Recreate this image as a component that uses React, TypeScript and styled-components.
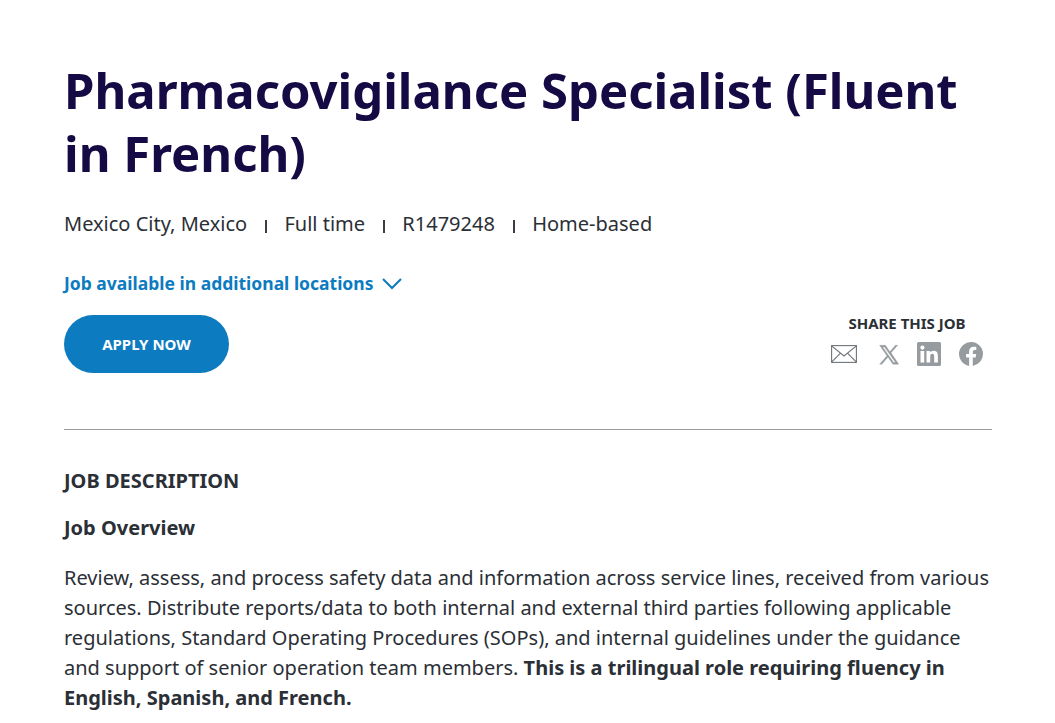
import styled, { createGlobalStyle } from "styled-components";

const GlobalStyle = createGlobalStyle`
    html, body {
        margin: 0;
        padding: 0;
        background: #ffffff;
        overflow: hidden;
    }
`;

const Page = styled.div`
    width: 1055px;
    height: 723px;
    overflow: hidden;
    box-sizing: border-box;
    padding: 59px 63px 0 64px;
    font-family: "Noto Sans", sans-serif;
    color: #2b2f36;
`;

const Title = styled.h1`
    margin: 0;
    font-size: 49px;
    line-height: 63px;
    font-weight: 700;
    color: #160a45;
`;

const MetaRow = styled.div`
    display: flex;
    align-items: center;
    margin-top: 24px;
    font-size: 20px;
    line-height: 30px;
`;

const Divider = styled.span`
    width: 1.5px;
    height: 13px;
    background: #3a3e44;
    margin: 4px 17.5px 0 18.3px;
`;

const LocationsLink = styled.a`
    display: flex;
    align-items: center;
    gap: 9px;
    margin-top: 31px;
    font-size: 17.5px;
    line-height: 26px;
    font-weight: 700;
    color: #0c7bc0;
`;

const ActionRow = styled.div`
    display: flex;
    justify-content: space-between;
    align-items: flex-start;
    margin-top: 19px;
    padding-bottom: 56px;
    border-bottom: 1px solid #9a9a9a;
`;

const ApplyButton = styled.button`
    width: 165px;
    height: 58px;
    border: none;
    border-radius: 29px;
    background: #0c7bc0;
    color: #ffffff;
    font-family: inherit;
    font-size: 15px;
    font-weight: 700;
`;

const Share = styled.div`
    display: flex;
    flex-direction: column;
    align-items: center;
    margin-top: -1px;
    margin-right: 9px;
`;

const ShareLabel = styled.div`
    font-size: 15px;
    line-height: 18px;
    font-weight: 700;
`;

const ShareIcons = styled.div`
    display: flex;
    align-items: center;
    gap: 18px;
    margin-top: 10px;
    color: #969b9f;
`;

const MailIcon = styled.svg`
    color: #6f7478;
    margin-right: 4px;
`;

const SectionLabel = styled.h2`
    margin: 37px 0 0;
    font-size: 20px;
    line-height: 28px;
    font-weight: 700;
`;

const SubHeading = styled.h3`
    margin: 19px 0 0;
    font-size: 20px;
    line-height: 28px;
    font-weight: 700;
`;

const Paragraph = styled.p`
    margin: 21px 0 0;
    font-size: 20px;
    line-height: 30px;
`;

export default function App() {
    return (
        <Page>
            <GlobalStyle />
            <Title>Pharmacovigilance Specialist (Fluent in French)</Title>
            <MetaRow>
                <span>Mexico City, Mexico</span>
                <Divider />
                <span>Full time</span>
                <Divider />
                <span>R1479248</span>
                <Divider />
                <span>Home-based</span>
            </MetaRow>
            <LocationsLink>
                Job available in additional locations
                <svg width="20" height="13" viewBox="0 0 20 13" fill="none" stroke="currentColor" strokeWidth="2">
                    <path d="M1 2l9 9 9-9" />
                </svg>
            </LocationsLink>
            <ActionRow>
                <ApplyButton>APPLY NOW</ApplyButton>
                <Share>
                    <ShareLabel>SHARE THIS JOB</ShareLabel>
                    <ShareIcons>
                        <MailIcon width="26" height="18" viewBox="0 0 26 18" fill="none" stroke="currentColor" strokeWidth="1.1">
                            <rect x="0.6" y="0.6" width="24.8" height="16.8" />
                            <path d="M0.6 0.8 13 11 25.4 0.8M0.6 17.2 9.5 8.2M25.4 17.2 16.5 8.2" />
                        </MailIcon>
                        <svg width="20" height="21" viewBox="0 0 24 24" fill="currentColor" stroke="currentColor" strokeWidth="0.5">
                            <path d="M14.2 10.2 22.4 1h-2.600l-6.800 7.800L7.700 1H.8l8.800 12.600L.8 23.600h2.600l7.400-8.600 5.900 8.600h6.900l-9-13.400ZM4.300 3h2.400l13.200 18.600h-2.400L4.300 3Z" />
                        </svg>
                        <svg width="24" height="24" viewBox="0 0 24 24" fill="currentColor">
                            <path d="M1.500 0h21A1.500 1.500 0 0 1 24 1.500v21a1.500 1.500 0 0 1-1.500 1.500h-21A1.500 1.500 0 0 1 0 22.500v-21A1.500 1.500 0 0 1 1.500 0Zm2 9v11.500h3.700V9H3.500Zm1.900-5.500a2.100 2.100 0 1 0 0 4.200 2.100 2.100 0 0 0 0-4.200ZM9.500 9v11.500h3.700v-6c0-1.600.5-2.800 2.100-2.800s1.900 1.300 1.900 2.900v5.900h3.700v-6.800c0-3.200-1.300-5-4.200-5-1.700 0-2.900.9-3.500 1.900V9H9.500Z" fillRule="evenodd" />
                        </svg>
                        <svg width="24" height="24" viewBox="0 0 24 24" fill="currentColor">
                            <path d="M24 12a12 12 0 1 0-13.900 11.900v-8.400H7.100V12h3V9.400c0-3 1.800-4.700 4.500-4.700 1.300 0 2.700.2 2.700.2v3h-1.500c-1.500 0-2 .9-2 1.900V12h3.400l-.5 3.500h-2.900v8.400A12 12 0 0 0 24 12Z" />
                        </svg>
                    </ShareIcons>
                </Share>
            </ActionRow>
            <SectionLabel>JOB DESCRIPTION</SectionLabel>
            <SubHeading>Job Overview</SubHeading>
            <Paragraph>
                Review, assess, and process safety data and information across service lines, received from various
                sources. Distribute reports/data to both internal and external third parties following applicable
                regulations, Standard Operating Procedures (SOPs), and internal guidelines under the guidance
                and support of senior operation team members. <strong>This is a trilingual role requiring fluency in
                English, Spanish, and French.</strong>
            </Paragraph>
        </Page>
    );
}
